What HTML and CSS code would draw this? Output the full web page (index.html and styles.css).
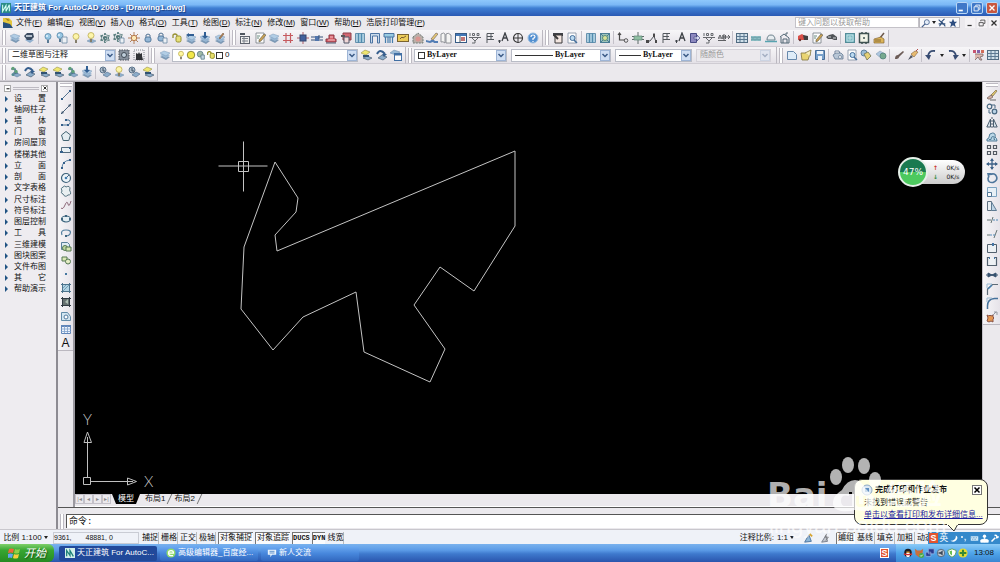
FILE: index.html
```html
<!DOCTYPE html>
<html lang="zh-CN">
<head>
<meta charset="utf-8">
<title>天正建筑 For AutoCAD 2008</title>
<link rel="stylesheet" href="styles.css">
</head>
<body>
<svg class="defs" aria-hidden="true">
<defs>
<symbol id="layers" viewBox="0 0 12 12"><path d="M1 8l4-2 6 2-4 3z" fill="#6f8fae"/><path d="M1 6l4-2 6 2-4 3z" fill="#8fb3d3"/><path d="M1 4l4-2 6 2-4 3z" fill="#a9c9e4" stroke="#6d8fb0" stroke-width=".5"/></symbol>
<symbol id="layerprint" viewBox="0 0 12 12"><path d="M2 8l3-2 6 2-4 3z" fill="#86a9cb"/><path d="M1 4l3-3h6l1 4-3 3H4z" fill="#24364d"/><path d="M3 4h6" stroke="#dde7f0" stroke-width="1.5"/></symbol>
<symbol id="bulb-b" viewBox="0 0 12 12"><circle cx="6" cy="4.5" r="3" fill="#8cc2e2" stroke="#41789e" stroke-width=".8"/><path d="M5 8h2v3H5z" fill="#466a88"/><circle cx="5" cy="4" r="1" fill="#e5f5ff"/></symbol>
<symbol id="bulb-y" viewBox="0 0 12 12"><circle cx="6" cy="4.5" r="3" fill="#fff7a0" stroke="#b5a33c" stroke-width=".8"/><path d="M5 8h2v3H5z" fill="#77705a"/></symbol>
<symbol id="bulb-bs" viewBox="0 0 12 12"><use href="#bulb-b" x="-2" y="-1" width="12" height="12"/><path d="M6 5h5v6H6z" fill="#eef3f7" stroke="#5b7c9a" stroke-width=".8"/></symbol>
<symbol id="bulb-yl" viewBox="0 0 12 12"><path d="M2 9l4-2 5 2-4 2z" fill="#86a9cb" stroke="#5d7f9f" stroke-width=".5"/><use href="#bulb-y" y="-1" width="12" height="12"/></symbol>
<symbol id="snow" viewBox="0 0 12 12"><path d="M6 1v10M1.500 3.500l9 5M1.500 8.500l9-5" stroke="#3c6767" stroke-width="1.6" stroke-dasharray="2 1"/><circle cx="6" cy="6" r="3.500" fill="none" stroke="#4a7474" stroke-width="1.200" stroke-dasharray="1.500 1"/></symbol>
<symbol id="snow-s" viewBox="0 0 12 12"><use href="#snow" x="-1" y="-1" width="12" height="12"/><path d="M7 6h4v5H7z" fill="#eef3f7" stroke="#5b7c9a" stroke-width=".8"/></symbol>
<symbol id="sun" viewBox="0 0 12 12"><path d="M6 0v12M0 6h12M2 2l8 8M10 2l-8 8" stroke="#a4663a" stroke-width=".9"/><circle cx="6" cy="6" r="2.700" fill="#ffe9b0" stroke="#b06a35"/></symbol>
<symbol id="lock-b" viewBox="0 0 12 12"><path d="M4 6V3q2-2 4 0v3" fill="none" stroke="#3d6387"/><rect x="3" y="5" width="6" height="5" rx="2" fill="#8ab1d3" stroke="#416c94"/></symbol>
<symbol id="lock-s" viewBox="0 0 12 12"><use href="#lock-b" x="-1" y="-1" width="12" height="12"/><path d="M7 6h4v5H7z" fill="#eef3f7" stroke="#5b7c9a" stroke-width=".8"/></symbol>
<symbol id="lock-y" viewBox="0 0 12 12"><path d="M2 6V3q2-2 4 0v2" fill="none" stroke="#8b8418" stroke-width="1.300"/><rect x="5" y="4" width="5" height="6" rx="1.500" fill="#e6df6a" stroke="#8b8418"/></symbol>
<symbol id="lay-l" viewBox="0 0 12 12"><use href="#layers" y="1" width="12" height="12"/><path d="M1 3l3-2v1h5v2H4v1z" fill="#174b86"/></symbol>
<symbol id="lay-d" viewBox="0 0 12 12"><use href="#layers" y="1" width="12" height="12"/><path d="M6 7L3 4h2V0h2v4h2z" fill="#174b86"/></symbol>
<symbol id="lay-p" viewBox="0 0 12 12"><use href="#layers" y="1" width="12" height="12"/><path d="M5 6l4-5 1 1-4 5z" fill="#b4773d" stroke="#523a25" stroke-width=".5"/></symbol>
<symbol id="lay-g" viewBox="0 0 12 12"><path d="M4 9l4-2 4 2-4 2z" fill="#7fa4c6" stroke="#426587" stroke-width=".5"/><path d="M2 3h5M4 7h5M6 3v5" stroke="#245579" stroke-width="1.200"/><circle cx="4" cy="2.500" r="1.700" fill="#4c9569"/><circle cx="7" cy="5.500" r="1.700" fill="#4c9569"/><circle cx="4" cy="8.500" r="1.500" fill="#3f7f86"/></symbol>
<symbol id="lay-y" viewBox="0 0 12 12"><path d="M3 9l4-2 5 2-4 2z" fill="#7fa4c6" stroke="#223a50" stroke-width=".6"/><path d="M1 4l4-3 5 2-4 3z" fill="#eee55e" stroke="#8c8530" stroke-width=".6"/><path d="M3 7h6" stroke="#173e64" stroke-width="2"/></symbol>
<symbol id="lay-c" viewBox="0 0 12 12"><path d="M3 9l4-3 5 2-4 3z" fill="#7fa4c6" stroke="#223a50" stroke-width=".6"/><path d="M2 5q3-6 8 0" fill="none" stroke="#1d4b80" stroke-width="2"/><path d="M7 5h5l-3 3z" fill="#1d4b80"/></symbol>
<symbol id="lay-k" viewBox="0 0 12 12"><path d="M4 9l4-3 4 2-4 3z" fill="#7fa4c6" stroke="#36587a" stroke-width=".6"/><circle cx="4" cy="4" r="3" fill="#a6b7c8" stroke="#48637e"/><path d="M4 2v3h2" stroke="#223a50" fill="none"/></symbol>
<symbol id="list" viewBox="0 0 12 12"><path d="M1 1h5v2H1z" fill="#3a424c"/><rect x="1.500" y="4.500" width="9" height="7" fill="#eee" stroke="#4a515c"/><path d="M3 6.500h6M3 9h6M5 5v6" stroke="#6b727c"/></symbol>
<symbol id="edit" viewBox="0 0 12 12"><path d="M2 1h8v10H2z" fill="#fff" stroke="#667076" stroke-width=".8"/><path d="M5 8l5-6 2 1-5 6-2 1z" fill="#c99a3d" stroke="#4c4634" stroke-width=".6"/><path d="M3 4h3M3 6h2" stroke="#568070"/></symbol>
<symbol id="hash" viewBox="0 0 12 12"><path d="M4 1v10M8.500 1v10M1 3.500h10M1 8.500h10" stroke="#c1464b" stroke-width="1.200"/></symbol>
<symbol id="column" viewBox="0 0 12 12"><path d="M6 0v12M0 6h12" stroke="#a34b57"/><rect x="3" y="3" width="6" height="6" fill="#2c4f91" stroke="#1b315f"/></symbol>
<symbol id="wall" viewBox="0 0 12 12"><path d="M0 5h4M0 8h4M8 5h4M8 8h4" stroke="#1f3f6a" stroke-width="1.200"/><path d="M4 4h4v5H4z" fill="#3d66a4"/><path d="M8 3v4" stroke="#1f3f6a"/></symbol>
<symbol id="redstair" viewBox="0 0 12 12"><path d="M1 10h10V7H9V3H4v4H1z" fill="#d8515b" stroke="#7f1f2d"/><path d="M3 8h7M5 5h3" stroke="#f2b8bc"/><path d="M1 11h10" stroke="#3c4a66"/></symbol>
<symbol id="redwin" viewBox="0 0 12 12"><path d="M3 1h8v7H3z" fill="#cf5661" stroke="#812732"/><path d="M1 3h4v2H1z" fill="#444"/><path d="M4 5h5v6H4z" fill="#f2d5d5" stroke="#3d4556"/></symbol>
<symbol id="door" viewBox="0 0 12 12"><path d="M1.500 1.500h9v9h-9z" fill="#a3cce0" stroke="#5686a5"/><path d="M4.500 1v10M7.500 1v10" stroke="#3d7fa5" stroke-width="1.300"/></symbol>
<symbol id="pi" viewBox="0 0 12 12"><path d="M1.500 11V1.500h9V11h-2V4h-5v7z" fill="#c5d9ec" stroke="#376498"/></symbol>
<symbol id="pi2" viewBox="0 0 12 12"><path d="M1 1.500h10V5H1z" fill="#8cc7e0" stroke="#376498"/><path d="M2.500 5v6M9.500 5v6M5 5v6M7 5v6" stroke="#2e6fa4" stroke-width="1.200"/></symbol>
<symbol id="sign" viewBox="0 0 12 12"><rect x=".5" y="2.500" width="11" height="7" fill="#ecc846" stroke="#6b5117"/><path d="M3 7l2-2 1 1 3-2" stroke="#6b4a17" fill="none"/></symbol>
<symbol id="roof" viewBox="0 0 12 12"><path d="M1 5l5-4 5 4v6H1z" fill="#b3a79f" stroke="#5f6c66" stroke-dasharray="2 1"/><circle cx="6" cy="7" r="2.500" fill="#d88a84"/></symbol>
<symbol id="pencil" viewBox="0 0 12 12"><path d="M5 7l5-6 2 1-5 6z" fill="#e5c463" stroke="#544" stroke-width=".6"/><path d="M0 8l4 1 1-1h3l1 1h3v2H8l-1-1-3 1-4-1z" fill="#3f6fae"/></symbol>
<symbol id="pages" viewBox="0 0 12 12"><path d="M1 2q3-2 4 0v9Q3 9 1 10zM6 2q2-2 5 1v8H6z" fill="#f6f6f4" stroke="#6b6f76" stroke-width=".8"/></symbol>
<symbol id="win" viewBox="0 0 12 12"><rect x=".5" y="1.500" width="11" height="9" fill="#fff" stroke="#1e4878"/><path d="M1 3h10" stroke="#2a67b0" stroke-width="2"/><path d="M5 4v7" stroke="#345"/><path d="M6 5h4v4H6z" fill="#b66"/></symbol>
<symbol id="coord" viewBox="0 0 12 12"><path d="M1 1v3M3.500 1.500h2v2h-2zM8 1.500h2v2H8zM0 5.500h12M3 6l3 3 3-3M6 8v3M3 11h3" fill="none" stroke="#55585c"/></symbol>
<symbol id="flag" viewBox="0 0 12 12"><path d="M3 11V1.500h7M3 4.500h6M3 7.500h7M7 1v7" stroke="#3f454a" fill="none"/></symbol>
<symbol id="dota" viewBox="0 0 12 12"><path d="M4 9l3-8 3 8M5 6h4" stroke="#262b30" stroke-width="1.300" fill="none"/><path d="M0 9h3M1.500 8v3" stroke="#262b30"/></symbol>
<symbol id="compass" viewBox="0 0 12 12"><circle cx="6" cy="6" r="4.500" fill="none" stroke="#222" stroke-width="1.200"/><path d="M6 1v10M1 6h10" stroke="#222"/></symbol>
<symbol id="help" viewBox="0 0 12 12"><circle cx="6" cy="6" r="5" fill="#3d83cd" stroke="#90b8dd"/><path d="M4 5q0-2 2-2t2 1.500Q8 6 6 6.500V8M6 9v1" fill="none" stroke="#fff" stroke-width="1.200"/></symbol>
<symbol id="plot" viewBox="0 0 12 12"><path d="M1 1h10v3H1z" fill="#282b30"/><path d="M3 3h7v8H3z" fill="#f5e6df" stroke="#222"/><path d="M2 3l4 4" stroke="#222" stroke-width="2"/></symbol>
<symbol id="preview" viewBox="0 0 12 12"><path d="M2 1h8v10H2z" fill="#fff" stroke="#718096" stroke-width=".8"/><circle cx="6.500" cy="6" r="2.500" fill="#b6d8f0" stroke="#2f5f91"/><path d="M8 8l3 3" stroke="#2f5f91" stroke-width="1.500"/></symbol>
<symbol id="ggrid" viewBox="0 0 12 12"><path d="M1.500 1.500h9v9h-9z" fill="#93bfb4" stroke="#356f88"/><circle cx="6" cy="6" r="2.500" fill="#d7e08d" stroke="#43806b"/><path d="M1 1l3 3M11 1L8 4M1 11l3-3M11 11L8 8" stroke="#356f88"/></symbol>
<symbol id="axis" viewBox="0 0 12 12"><path d="M2.500 1v7H8M1 3l1.500-2L4 3" stroke="#333" fill="none" stroke-width="1.200"/><circle cx="9" cy="8.500" r="1.800" fill="none" stroke="#444"/></symbol>
<symbol id="gcross" viewBox="0 0 12 12"><path d="M6 0v12M0 4.500h3M9 4.500h3M0 7.500h3M9 7.500h3" stroke="#4b5a56"/><path d="M2 4h8v4H2z" fill="#84b998" stroke="#477765" stroke-width=".7"/></symbol>
<symbol id="nline" viewBox="0 0 12 12"><path d="M1 9h3l4-5 2 6M8 4V1" stroke="#3c4146" fill="none"/><path d="M0 8h3v3H0zM9 8h2v3H9zM7 2h2v3H7z" fill="#333"/></symbol>
<symbol id="exit" viewBox="0 0 12 12"><path d="M1.500 1.500h6v9h-6z" fill="#807bb8" stroke="#333777"/><path d="M5 5h3V3l3 3-3 3V7H5z" fill="#d8ddf2" stroke="#333777" stroke-width=".7"/></symbol>
<symbol id="ab" viewBox="0 0 12 12"><path d="M0 7l2-4 2 4M1 6h2M5 3h2l1 1-1 1H5zM5 5h2l1 1-1 1H5zM5 3v4M0 8.500h8M8 5h4M10 3l2 2-2 2" fill="none" stroke="#4b4d50"/></symbol>
<symbol id="table" viewBox="0 0 12 12"><rect x=".5" y="1.500" width="11" height="9" fill="#cddfe9" stroke="#3d5b73"/><path d="M4 2v8M8 2v8M1 4.500h10M1 7.500h10" stroke="#496a86"/></symbol>
<symbol id="water" viewBox="0 0 12 12"><path d="M1 4h10v5H1z" fill="#7fb8be"/><path d="M1 5l2 1 2-1 2 1 2-1 2 1M1 8l2-1 2 1 2-1 2 1 2-1" stroke="#4a8794" stroke-width=".7" fill="none"/></symbol>
<symbol id="dome" viewBox="0 0 12 12"><path d="M2 8q0-5 4-5t4 5z" fill="#e6edf0" stroke="#5c7480"/><path d="M0 9.500h12" stroke="#459aa8" stroke-width="1.500"/></symbol>
<symbol id="house" viewBox="0 0 12 12"><path d="M1 5l4-3 5 4M2 5v6h8V6M4 11V7h4v4M7 4V1h2" fill="none" stroke="#3e5665"/></symbol>
<symbol id="car" viewBox="0 0 12 12"><path d="M1 4l4-2 3 2-1 4H1z" fill="#d73b32"/><path d="M6 3l5 1v4H7z" fill="#292929"/><circle cx="3" cy="8" r="1.200" fill="#522"/></symbol>
<symbol id="eye" viewBox="0 0 12 12"><path d="M0 5l3-2 4-1 4 3v3H8L6 7H2z" fill="#3b3f42"/><path d="M2 5h3M7 6h3" stroke="#cfd3d5"/></symbol>
<symbol id="hatch" viewBox="0 0 12 12"><rect x="1.500" y="1.500" width="9" height="9" fill="#6eb4be" stroke="#40808d"/><path d="M3 3h6v6H3zM5 5h2v2H5z" fill="none" stroke="#c5e6ea" stroke-width=".8"/></symbol>
<symbol id="frame" viewBox="0 0 12 12"><rect x="1.500" y="1.500" width="9" height="9" fill="#f3f6e8" stroke="#283e3d" stroke-width="1.500"/><path d="M4 0v2M8 0v2M4 10v2M8 10v2M5 6h2" stroke="#283e3d" stroke-width="1.500"/></symbol>
<symbol id="broom" viewBox="0 0 12 12"><path d="M7 6l4-5" stroke="#594333" stroke-width="1.500"/><path d="M1 7l7-2 3 2v4H1z" fill="#dbae45" stroke="#79571c" stroke-width=".7"/><path d="M3 7v3M5 7v3M7 7v3" stroke="#79571c"/></symbol>
<symbol id="gear" viewBox="0 0 12 12"><rect x="1" y="1" width="10" height="10" fill="#788390" stroke="#333b45" stroke-dasharray="1.500 1"/><circle cx="6" cy="6" r="2.500" fill="#b9cbd9" stroke="#28343f"/></symbol>
<symbol id="gear-k" viewBox="0 0 12 12"><path d="M1 1h10v10H1z" fill="none" stroke="#737780" stroke-dasharray="1 1"/><path d="M3 4l2 1 1-2 1 2 2-1v3l1 4H3z" fill="#17191c"/></symbol>
<symbol id="laywin" viewBox="0 0 12 12"><path d="M0 4l4-3 6 2-4 3z" fill="#8fb3d3" stroke="#587a9c" stroke-width=".5"/><rect x="4.500" y="4.500" width="7" height="7" fill="#fff" stroke="#2b5f9a"/><path d="M4.500 5.500h7" stroke="#2b5f9a" stroke-width="2"/></symbol>
<symbol id="new" viewBox="0 0 12 12"><path d="M1.500 2.500h6l3 3v5h-9z" fill="#dcecfa" stroke="#547ba3"/></symbol>
<symbol id="open" viewBox="0 0 12 12"><path d="M1 4h5l1 1h3l-2 6H2z" fill="#e9d262" stroke="#746524" stroke-width=".8"/><path d="M5 4l6-3-1 6" fill="#f9efb1" stroke="#746524" stroke-width=".8"/></symbol>
<symbol id="save" viewBox="0 0 12 12"><path d="M1.500 1.500h9v9h-9z" fill="#6997c7" stroke="#315d8d"/><path d="M3 2h6v3H3zM4 7h4v4H4z" fill="#eef5fb"/></symbol>
<symbol id="print" viewBox="0 0 12 12"><path d="M3 5V2h4l1 3" fill="#fff" stroke="#627791"/><path d="M1 6l3-2h5l2 2v4H3z" fill="#b1c2d3" stroke="#526b87" stroke-width=".8"/><circle cx="8" cy="8" r="1.500" fill="#fff" stroke="#526b87" stroke-width=".7"/></symbol>
<symbol id="publish" viewBox="0 0 12 12"><circle cx="4" cy="4" r="3" fill="#8eb4d2" stroke="#4c7494"/><path d="M4 5l4-2 3 4-4 4z" fill="#e5cd65" stroke="#5e6340" stroke-width=".8"/></symbol>
<symbol id="globe" viewBox="0 0 12 12"><path d="M1 5l4-3 5 3-3 5z" fill="#a6c2dd" stroke="#7794b0" stroke-width=".6"/><circle cx="8" cy="7" r="3" fill="#67a182" stroke="#40756d" stroke-width=".8"/></symbol>
<symbol id="brush" viewBox="0 0 12 12"><path d="M2 10q0-4 3-4l5-4 1 1-5 5q0 2-4 2z" fill="#5b4943"/></symbol>
<symbol id="match" viewBox="0 0 12 12"><path d="M1 11l3-5 2 2z" fill="#3a4250"/><path d="M4 5l3 3 4-5-3-1z" fill="#e7b45f" stroke="#876334" stroke-width=".7"/><path d="M9 2l2-2" stroke="#a33"/></symbol>
<symbol id="undo" viewBox="0 0 12 12"><path d="M10 2Q4 1 3 7" fill="none" stroke="#1f3661" stroke-width="1.800"/><path d="M0 6h6l-2 5z" fill="#1f3661"/></symbol>
<symbol id="redo" viewBox="0 0 12 12"><path d="M2 2q6-1 7 5" fill="none" stroke="#1f3661" stroke-width="1.800"/><path d="M6 6h6l-4 5z" fill="#1f3661"/></symbol>
<symbol id="props" viewBox="0 0 12 12"><path d="M0 1h3v3H0z" fill="#c33f5d"/><path d="M4 1h3v3H4z" fill="#734fa1"/><path d="M8 1h3v3H8z" fill="#ce5b44"/><path d="M2 5h8v2l-3 1 2 3H7L5 8l-3 3" fill="#dcb0a6" stroke="#695353" stroke-width=".8"/></symbol>
<symbol id="line" viewBox="0 0 12 12"><path d="M2 10l8-8" stroke="#426585"/><path d="M1 9h2v2H1zM9 1h2v2H9z" fill="#1b4c7d"/></symbol>
<symbol id="xline" viewBox="0 0 12 12"><path d="M1 11L11 1" stroke="#344e67"/><path d="M1 11l1-3 2 2zM11 1L8 2l2 2z" fill="#233f5c"/></symbol>
<symbol id="pline" viewBox="0 0 12 12"><path d="M1 9h7q4-2 1-5H6" fill="none" stroke="#2c5f86"/><path d="M1 8h2v2H1zM7 8h2v2H7zM5 3h2v2H5z" fill="#1b4c7d"/></symbol>
<symbol id="poly" viewBox="0 0 12 12"><path d="M6 1.500l4.500 3.500-1.700 5.500H3.200L1.500 5z" fill="#e3edf1" stroke="#2c5262"/></symbol>
<symbol id="rect" viewBox="0 0 12 12"><path d="M1.500 3.500h9v5h-9z" fill="#e7eff4" stroke="#3d5a70"/><path d="M0 7h3v2H0zM9 3h2v2H9z" fill="#1b4c7d"/></symbol>
<symbol id="arc" viewBox="0 0 12 12"><path d="M2 10q0-7 8-8" stroke="#47769c" fill="none"/><path d="M1 9h2v2H1zM3 4h2v2H3zM9 1h2v2H9z" fill="#1b4c7d"/></symbol>
<symbol id="circle" viewBox="0 0 12 12"><circle cx="6" cy="6" r="4.500" fill="#edf5fa" stroke="#254e69" stroke-width="1.200"/><path d="M6 6l3-3" stroke="#357"/><circle cx="6" cy="6" r="1.300" fill="#2b6da6"/></symbol>
<symbol id="cloud" viewBox="0 0 12 12"><path d="M3 2q2-2 3 0 4-2 4 2-1 1 0 2 2 4-2 4-3 3-5-1-3-1-1-3-2-3 1-4z" fill="#e9f0f2" stroke="#3e6271"/></symbol>
<symbol id="spline" viewBox="0 0 12 12"><path d="M1 9q2 2 4-3t3-1 3-3" stroke="#835a6c" fill="none"/></symbol>
<symbol id="ell" viewBox="0 0 12 12"><ellipse cx="6" cy="6" rx="4.500" ry="3" fill="#e2eef3" stroke="#23516e" stroke-width="1.200"/><path d="M1 5h2v2H1zM9 5h2v2H9zM5 2h2v2H5z" fill="#23516e"/></symbol>
<symbol id="ellarc" viewBox="0 0 12 12"><path d="M2 8Q0 3 6 3t4 4q-1 2-4 2" fill="none" stroke="#3d6f93" stroke-width="1.200"/><path d="M5 8h2v2H5z" fill="#23516e"/></symbol>
<symbol id="insblock" viewBox="0 0 12 12"><path d="M1.500 1.500h6l2 2v5h-8z" fill="#dcebf3" stroke="#45728f"/><circle cx="5" cy="7" r="2.500" fill="#b7d497" stroke="#40693c"/><path d="M6 6h5v4H6z" fill="#d5e7a9" stroke="#40693c"/></symbol>
<symbol id="mkblock" viewBox="0 0 12 12"><path d="M2 3h5v4H2z" fill="#d9e8ad" stroke="#40693c"/><circle cx="8" cy="7.500" r="2.500" fill="#e5eec0" stroke="#40693c"/></symbol>
<symbol id="point" viewBox="0 0 12 12"><path d="M5 5h2v2H5z" fill="#2d6996"/></symbol>
<symbol id="hat" viewBox="0 0 12 12"><path d="M2 2h8v8H2z" fill="#a9cfe2"/><path d="M1 2.500h10M1 9.500h10M2.500 1v10M9.500 1v10" stroke="#37637f"/><path d="M3 6l3-3M3 9l6-6" stroke="#6395ae"/></symbol>
<symbol id="grad" viewBox="0 0 12 12"><path d="M2 2h8v8H2z" fill="#53605f"/><path d="M1 2.500h10M1 9.500h10M2.500 1v10M9.500 1v10" stroke="#17232b"/><path d="M5 6l3-3v5z" fill="#a6b8ad"/></symbol>
<symbol id="region" viewBox="0 0 12 12"><path d="M1.500 2.500h6l3 4v4h-9z" fill="#cfe5f1" stroke="#4e7e9f"/><circle cx="6" cy="7" r="2" fill="#fff" stroke="#3d6c94"/></symbol>
<symbol id="tbl" viewBox="0 0 12 12"><path d="M1.500 2.500h9v8h-9z" fill="#eff5fd" stroke="#4e78b1"/><path d="M1 3h10" stroke="#4e78b1" stroke-width="2"/><path d="M4.500 3v7M7.500 3v7M1 6h10M1 8.500h10" stroke="#7097c6" stroke-width=".8"/></symbol>
<symbol id="erase" viewBox="0 0 12 12"><path d="M5 6l5-5 1 1-4 5z" fill="#dfc35d" stroke="#6e5b30" stroke-width=".7"/><path d="M1 9l4-3 2 2-3 2H2z" fill="#c9a593" stroke="#5e4c48" stroke-width=".7"/><path d="M4 11h6" stroke="#555"/></symbol>
<symbol id="copy" viewBox="0 0 12 12"><circle cx="3.500" cy="3.500" r="2.300" fill="none" stroke="#315572" stroke-width="1.200"/><circle cx="8.500" cy="8.500" r="2.300" fill="#b5d1e6" stroke="#315572" stroke-width="1.200"/><path d="M6 2h3v3M3 7v3h2" fill="none" stroke="#315572"/></symbol>
<symbol id="mirror" viewBox="0 0 12 12"><path d="M4.500 2v8H.8zM7.500 2v8h3.700z" fill="#d4e0e9" stroke="#344b5e"/><path d="M6 0v12" stroke="#344b5e" stroke-dasharray="2 1"/></symbol>
<symbol id="offset" viewBox="0 0 12 12"><path d="M1 10V8q2 0 2-2 0-4 3.500-4T9 6q2 1 2 4z" fill="#b4d5e7" stroke="#3c6d8c"/><path d="M3 8.500h2q0-3 2-3t1 3h1" fill="none" stroke="#3c6d8c"/></symbol>
<symbol id="array" viewBox="0 0 12 12"><path d="M1.500 1.500h3v3h-3zM7.500 1.500h3v3h-3zM1.500 7.500h3v3h-3zM7.500 7.500h3v3h-3z" fill="#f5f5f5" stroke="#3f4650" stroke-width="1.200"/></symbol>
<symbol id="move" viewBox="0 0 12 12"><path d="M6 1v10M1 6h10" stroke="#244e79" stroke-width="1.300"/><path d="M6 0l2 3H4zM6 12l2-3H4zM0 6l3-2v4zM12 6L9 4v4z" fill="#244e79"/></symbol>
<symbol id="rotate" viewBox="0 0 12 12"><path d="M4 2.500q5-2 6.500 2T7 10.500Q2 11 2 6.500L3 4" fill="none" stroke="#3a6791" stroke-width="1.600"/><path d="M1 1h5L2 5z" fill="#3a6791"/></symbol>
<symbol id="scale" viewBox="0 0 12 12"><path d="M1.500 1.500h9v9h-9z" fill="#e7f1f8" stroke="#6d9abb"/><path d="M1.500 6.500h4v4h-4z" fill="#fff" stroke="#3f688b"/></symbol>
<symbol id="stretch" viewBox="0 0 12 12"><path d="M1.500 1.500h4v9h-4z" fill="#e9eff4" stroke="#4c5f71"/><path d="M5.500 2l5 8.500h-5z" fill="#bad3e5" stroke="#4c6c87"/></symbol>
<symbol id="trim" viewBox="0 0 12 12"><path d="M1 6h4M5 9l2-6" stroke="#566"/><path d="M7 6h5" stroke="#3f7fb1" stroke-dasharray="2 1"/></symbol>
<symbol id="extend" viewBox="0 0 12 12"><path d="M1 7h3M8 10l3-8" stroke="#566"/><path d="M4 7h5" stroke="#3f7fb1" stroke-dasharray="2 1"/></symbol>
<symbol id="brk1" viewBox="0 0 12 12"><path d="M1.500 2.500h9v8h-9z" fill="#eef2f5" stroke="#3e4e5d"/><path d="M6 1h2v3H6z" fill="#2f669c"/></symbol>
<symbol id="brk2" viewBox="0 0 12 12"><path d="M4 2.500H1.500v8h9v-8H8" fill="#eef2f5" stroke="#3e4e5d" stroke-width="1.200"/><path d="M3 2h1v2H3zM8 2h1v2H8z" fill="#2f669c"/></symbol>
<symbol id="join" viewBox="0 0 12 12"><path d="M0 6h12" stroke="#1f3e5e"/><path d="M2 4l4 2-4 2zM10 4L6 6l4 2z" fill="#1f3e5e" stroke="#1f3e5e"/></symbol>
<symbol id="chamfer" viewBox="0 0 12 12"><path d="M1.500 12V6l5-4.500H12" fill="none" stroke="#4b5b68" stroke-width="1.200"/><path d="M1 5V1h5" fill="none" stroke="#8fb4ce"/><path d="M2 6l4-4" stroke="#2b6da6" stroke-width="1.300"/></symbol>
<symbol id="fillet" viewBox="0 0 12 12"><path d="M1.500 12V9q0-7 7-7.500H12" fill="none" stroke="#2f6291" stroke-width="1.500"/><path d="M1 5V1h5" fill="none" stroke="#8fb4ce"/></symbol>
<symbol id="explode" viewBox="0 0 12 12"><path d="M1 4l2 1 1-1 1 1 2-1v2l1 1-1 1v3l-2-1-2 1-2-1 1-3z" fill="#e48b3c" stroke="#7a3f31"/><path d="M7 4l3-3M8 1h3v3" fill="none" stroke="#8a8f98"/></symbol>
<symbol id="chev" viewBox="0 0 8 8"><path d="M1.500 3L4 5.500 6.500 3" fill="none" stroke="#3b5a86" stroke-width="1.500"/></symbol>
</defs>
</svg>

<div class="app">
<header class="title">
  <svg class="logo" viewBox="0 0 12 12"><path d="M0 0h12v12H0z" fill="#2a8c86"/><path d="M2 2v8l4-7v7l4-8v8" fill="none" stroke="#d8fff6" stroke-width="1.300"/></svg>
  <h1>天正建筑 For AutoCAD 2008 - [Drawing1.dwg]</h1>
  <button class="wb" aria-label="最小化"><svg viewBox="0 0 12 12"><path d="M2 9h5" stroke="#fff" stroke-width="2"/></svg></button>
  <button class="wb" aria-label="还原"><svg viewBox="0 0 12 12"><path d="M4.500 4V2.500h5v5H8M2.500 4.500h5v5h-5z" fill="none" stroke="#fff"/></svg></button>
  <button class="wb close" aria-label="关闭"><svg viewBox="0 0 12 12"><path d="M3 3l6 6M9 3L3 9" stroke="#fff" stroke-width="1.600"/></svg></button>
</header>

<nav class="menu">
  <svg class="doc" viewBox="0 0 12 12"><path d="M1 1h6l3 3v7H1z" fill="#e4c53e"/><path d="M1 5l7 2 3 4H1z" fill="#264f7e"/><path d="M3 1l3 3 2-1z" fill="#9a7d24"/></svg>
  <button>文件(<u>F</u>)</button><button>编辑(<u>E</u>)</button><button>视图(<u>V</u>)</button><button>插入(<u>I</u>)</button><button>格式(<u>O</u>)</button><button>工具(<u>T</u>)</button><button>绘图(<u>D</u>)</button><button>标注(<u>N</u>)</button><button>修改(<u>M</u>)</button><button>窗口(<u>W</u>)</button><button>帮助(<u>H</u>)</button><button>浩辰打印管理(<u>P</u>)</button>
  <input class="ask" type="text" aria-label="帮助" placeholder="键入问题以获取帮助">
  <span class="asktools">
    <button aria-label="搜索"><svg viewBox="0 0 12 12"><circle cx="7" cy="5" r="3" fill="#e4edf8" stroke="#46608c"/><path d="M5 7l-4 4" stroke="#46608c" stroke-width="1.500"/></svg></button>
    <i class="dd"></i>
    <button aria-label="通讯中心"><svg viewBox="0 0 12 12"><path d="M2 2l3 3 4-4M3 10l3-5 4 5M2 7h8" fill="none" stroke="#31517d" stroke-width="1.300"/></svg></button>
    <button aria-label="收藏夹"><svg viewBox="0 0 12 12"><path d="M6 1l1.500 3.500H11L8.300 7l1 4L6 8.800 2.700 11l1-4L1 4.500h3.500z" fill="#2e4e80"/></svg></button>
  </span>
  <button class="mdi" aria-label="最小化文档"><svg viewBox="0 0 12 12"><path d="M3 9h5" stroke="#333" stroke-width="1.500"/></svg></button>
  <button class="mdi" aria-label="还原文档"><svg viewBox="0 0 12 12"><path d="M4.500 4V2.500h5v4H8M2.500 5.500h5v4h-5z" fill="none" stroke="#444"/></svg></button>
  <button class="mdi" aria-label="关闭文档"><svg viewBox="0 0 12 12"><path d="M3 3l6 6M9 3L3 9" stroke="#333" stroke-width="1.500"/></svg></button>
</nav>

<div class="row first">
  <div class="bar bar-a"><i class="grip"></i>
    <button aria-label="图层"><svg><use href="#layers"/></svg></button><button aria-label="图层打印"><svg><use href="#layerprint"/></svg></button><i class="sep"></i>
    <button aria-label="关闭图层"><svg><use href="#bulb-b"/></svg></button><button aria-label="关闭其他层"><svg><use href="#bulb-bs"/></svg></button><button aria-label="打开图层"><svg><use href="#bulb-y"/></svg></button><button aria-label="图层全开"><svg><use href="#bulb-yl"/></svg></button><button aria-label="冻结图层"><svg><use href="#snow"/></svg></button><button aria-label="冻结其他"><svg><use href="#snow-s"/></svg></button><button aria-label="解冻图层"><svg><use href="#sun"/></svg></button><button aria-label="锁定图层"><svg><use href="#lock-b"/></svg></button><button aria-label="锁定其他"><svg><use href="#lock-s"/></svg></button><button aria-label="解锁图层"><svg><use href="#lock-y"/></svg></button><button aria-label="图层恢复"><svg><use href="#lay-l"/></svg></button><button aria-label="合并图层"><svg><use href="#lay-d"/></svg></button><button aria-label="图元改层"><svg><use href="#lay-p"/></svg></button>
  </div>
  <div class="bar bar-b"><i class="grip"></i>
    <button aria-label="选项"><svg><use href="#list"/></svg></button><button aria-label="编辑"><svg><use href="#edit"/></svg></button><button aria-label="图层"><svg><use href="#layers"/></svg></button><button aria-label="轴网"><svg><use href="#hash"/></svg></button><button aria-label="柱子"><svg><use href="#column"/></svg></button><button aria-label="墙体"><svg><use href="#wall"/></svg></button><button aria-label="楼梯"><svg><use href="#redstair"/></svg></button><button aria-label="窗"><svg><use href="#redwin"/></svg></button><button aria-label="门"><svg><use href="#door"/></svg></button><button aria-label="门套"><svg><use href="#pi"/></svg></button><button aria-label="台阶"><svg><use href="#pi2"/></svg></button><button aria-label="标牌"><svg><use href="#sign"/></svg></button><button aria-label="屋顶"><svg><use href="#roof"/></svg></button><button aria-label="绘制"><svg><use href="#pencil"/></svg></button><button aria-label="图库"><svg><use href="#pages"/></svg></button><button aria-label="表格"><svg><use href="#win"/></svg></button><button aria-label="坐标"><svg><use href="#coord"/></svg></button><button aria-label="标高"><svg><use href="#flag"/></svg></button><button aria-label="文字"><svg><use href="#dota"/></svg></button><button aria-label="指北针"><svg><use href="#compass"/></svg></button><button aria-label="帮助"><svg><use href="#help"/></svg></button>
  </div>
  <div class="bar bar-c"><i class="grip"></i>
    <button aria-label="出图"><svg><use href="#plot"/></svg></button><button aria-label="预览"><svg><use href="#preview"/></svg></button><i class="sep"></i>
    <button aria-label="门"><svg><use href="#door"/></svg></button><button aria-label="网格"><svg><use href="#ggrid"/></svg></button><i class="sep"></i>
    <button aria-label="坐标轴"><svg><use href="#axis"/></svg></button><button aria-label="对齐"><svg><use href="#gcross"/></svg></button><button aria-label="折线"><svg><use href="#nline"/></svg></button><button aria-label="标高"><svg><use href="#flag"/></svg></button><button aria-label="文字"><svg><use href="#dota"/></svg></button><button aria-label="导出"><svg><use href="#exit"/></svg></button><button aria-label="坐标"><svg><use href="#coord"/></svg></button><button aria-label="替换"><svg><use href="#ab"/></svg></button><i class="sep"></i>
    <button aria-label="表格"><svg><use href="#table"/></svg></button><button aria-label="水面"><svg><use href="#water"/></svg></button><button aria-label="穹顶"><svg><use href="#dome"/></svg></button><button aria-label="房屋"><svg><use href="#house"/></svg></button><i class="sep"></i>
    <button aria-label="车位"><svg><use href="#car"/></svg></button><button aria-label="编辑"><svg><use href="#edit"/></svg></button><button aria-label="视图"><svg><use href="#eye"/></svg></button><i class="sep"></i>
    <button aria-label="填充"><svg><use href="#hatch"/></svg></button><button aria-label="图框"><svg><use href="#frame"/></svg></button><button aria-label="清理"><svg><use href="#broom"/></svg></button>
  </div>
</div>

<div class="row">
  <div class="bar bar-d"><i class="grip"></i>
    <label class="combo grow"><select aria-label="工作空间"><option>二维草图与注释</option></select><span class="arr"><svg><use href="#chev"/></svg></span></label>
    <button aria-label="工作空间设置"><svg><use href="#gear"/></svg></button><button aria-label="我的工作空间"><svg><use href="#gear-k"/></svg></button>
  </div>
  <div class="bar bar-e"><i class="grip"></i>
    <button aria-label="图层特性"><svg><use href="#layers"/></svg></button>
    <label class="combo grow"><svg><use href="#bulb-y"/></svg><svg viewBox="0 0 12 12"><circle cx="6" cy="6" r="4.500" fill="#f2e84a" stroke="#77752b"/></svg><svg viewBox="0 0 12 12"><circle cx="5" cy="5" r="3.500" fill="#9fb9a5" stroke="#60818a"/><path d="M6 6h4v5H6z" fill="#c2d5e2" stroke="#60818a"/></svg><svg><use href="#lock-y"/></svg><i class="sw"></i><select aria-label="图层"><option>0</option></select><span class="arr"><svg><use href="#chev"/></svg></span></label>
    <button aria-label="置为当前"><svg><use href="#lay-y"/></svg></button><button aria-label="上一个图层"><svg><use href="#lay-c"/></svg></button><button aria-label="图层状态"><svg><use href="#laywin"/></svg></button>
  </div>
  <div class="bar bar-f"><i class="grip"></i>
    <label class="combo c1 by"><i class="sw"></i><select aria-label="颜色"><option>ByLayer</option></select><span class="arr"><svg><use href="#chev"/></svg></span></label>
    <label class="combo c2 by"><i class="ln"></i><select aria-label="线型"><option>ByLayer</option></select><span class="arr"><svg><use href="#chev"/></svg></span></label>
    <label class="combo c3 by"><i class="ln short"></i><select aria-label="线宽"><option>ByLayer</option></select><span class="arr"><svg><use href="#chev"/></svg></span></label>
    <label class="combo c4 off"><select aria-label="打印样式" disabled><option>随颜色</option></select><span class="arr"><svg><use href="#chev"/></svg></span></label>
  </div>
  <div class="bar bar-g"><i class="grip"></i>
    <button aria-label="新建"><svg><use href="#new"/></svg></button><button aria-label="打开"><svg><use href="#open"/></svg></button><button aria-label="保存"><svg><use href="#save"/></svg></button><i class="sep"></i>
    <button aria-label="打印"><svg><use href="#print"/></svg></button><button aria-label="打印预览"><svg><use href="#preview"/></svg></button><button aria-label="发布"><svg><use href="#publish"/></svg></button><button aria-label="网络"><svg><use href="#globe"/></svg></button><i class="sep"></i>
    <button aria-label="画笔"><svg><use href="#brush"/></svg></button><button aria-label="特性匹配"><svg><use href="#match"/></svg></button><i class="sep"></i>
    <button aria-label="放弃"><svg><use href="#undo"/></svg></button><i class="dd"></i><button aria-label="重做"><svg><use href="#redo"/></svg></button><i class="dd"></i><i class="sep"></i>
    <button aria-label="特性"><svg><use href="#props"/></svg></button><button aria-label="设计中心"><svg><use href="#table"/></svg></button>
  </div>
</div>

<div class="row">
  <div class="bar bar-h"><i class="grip"></i>
    <button aria-label="图层匹配"><svg><use href="#lay-g"/></svg></button><button aria-label="更改图层"><svg><use href="#lay-c"/></svg></button><button aria-label="复制到图层"><svg><use href="#lay-y"/></svg></button><button aria-label="图层漫游"><svg><use href="#lay-y"/></svg></button><button aria-label="图层隔离"><svg><use href="#lay-g"/></svg></button><button aria-label="取消隔离"><svg><use href="#lay-d"/></svg></button><i class="sep"></i>
    <button aria-label="图层冻结"><svg><use href="#lay-k"/></svg></button><button aria-label="图层关闭"><svg><use href="#bulb-yl"/></svg></button><button aria-label="图层锁定"><svg><use href="#lay-k"/></svg></button><button aria-label="图层解锁"><svg><use href="#lay-y"/></svg></button>
  </div>
</div>

<div class="body">
  <aside class="palette">
    <div class="phead"><button aria-label="折叠"><svg viewBox="0 0 8 8"><path d="M2 5h4" stroke="#222" stroke-width="1.500"/></svg></button><i></i><button aria-label="关闭"><svg viewBox="0 0 8 8"><path d="M2 2l4 4M6 2L2 6" stroke="#222" stroke-width="1.300"/></svg></button></div>
    <ul>
      <li><button>设　　置</button></li><li><button>轴网柱子</button></li><li><button>墙　　体</button></li><li><button>门　　窗</button></li><li><button>房间屋顶</button></li><li><button>楼梯其他</button></li><li><button>立　　面</button></li><li><button>剖　　面</button></li><li><button>文字表格</button></li><li><button>尺寸标注</button></li><li><button>符号标注</button></li><li><button>图层控制</button></li><li><button>工　　具</button></li><li><button>三维建模</button></li><li><button>图块图案</button></li><li><button>文件布图</button></li><li><button>其　　它</button></li><li><button>帮助演示</button></li>
    </ul>
  </aside>

  <div class="main">
    <div class="work">
      <div class="vwrap"><div class="vbar draw"><i class="hgrip"></i>
        <button aria-label="直线"><svg><use href="#line"/></svg></button><button aria-label="构造线"><svg><use href="#xline"/></svg></button><button aria-label="多段线"><svg><use href="#pline"/></svg></button><button aria-label="正多边形"><svg><use href="#poly"/></svg></button><button aria-label="矩形"><svg><use href="#rect"/></svg></button><button aria-label="圆弧"><svg><use href="#arc"/></svg></button><button aria-label="圆"><svg><use href="#circle"/></svg></button><button aria-label="修订云线"><svg><use href="#cloud"/></svg></button><button aria-label="样条曲线"><svg><use href="#spline"/></svg></button><button aria-label="椭圆"><svg><use href="#ell"/></svg></button><button aria-label="椭圆弧"><svg><use href="#ellarc"/></svg></button><button aria-label="插入块"><svg><use href="#insblock"/></svg></button><button aria-label="创建块"><svg><use href="#mkblock"/></svg></button><button aria-label="点"><svg><use href="#point"/></svg></button><button aria-label="图案填充"><svg><use href="#hat"/></svg></button><button aria-label="渐变色"><svg><use href="#grad"/></svg></button><button aria-label="面域"><svg><use href="#region"/></svg></button><button aria-label="表格"><svg><use href="#tbl"/></svg></button><button class="mtext" aria-label="多行文字">A</button>
      </div></div>
      <div class="view">
        <div class="canvas">
          <svg class="drawing" fill="none" stroke="#c4c4c4" stroke-width="1">
            <path d="M200 80l23 36-2 14-21 23 2 16L440 69v75l-41 65-34-24-26 38 31 44-15 33-66-30-8-60-53 25-30 33-32-41 3-62z"/>
            <path d="M143.500 84h49M168.500 59.500v50M163.500 79.500h10v10h-10z"/>
          </svg>
          <svg class="ucs" viewBox="0 -6 80 86" fill="none" stroke="#c0c0c0"><path d="M8.500 63.500h7v7h-7zM12.500 63V28.500M9 28.500h7.500L12.500 18zM16 67.500h36M52.500 64v7l9-3.500zM52 67.500h6M12.500 28v-5"/><text x="8" y="11">Y</text><text x="69" y="73">X</text></svg>
          <div class="meter"><span class="ball">47%</span><span class="rates"><b class="up">↑</b><span>0K/s</span><b class="dn">↓</b><span>0K/s</span></span></div>
        </div>
        <div class="tabs">
          <span class="nav"><button aria-label="首个">|◂</button><button aria-label="上一个">◂</button><button aria-label="下一个">▸</button><button aria-label="末个">▸|</button></span>
          <button class="tab on">模型</button><button class="tab">布局1</button><button class="tab">布局2</button>
        </div>
      </div>
      <div class="vwrap right"><div class="vbar modify"><i class="hgrip"></i>
        <button aria-label="删除"><svg><use href="#erase"/></svg></button><button aria-label="复制"><svg><use href="#copy"/></svg></button><button aria-label="镜像"><svg><use href="#mirror"/></svg></button><button aria-label="偏移"><svg><use href="#offset"/></svg></button><button aria-label="阵列"><svg><use href="#array"/></svg></button><button aria-label="移动"><svg><use href="#move"/></svg></button><button aria-label="旋转"><svg><use href="#rotate"/></svg></button><button aria-label="缩放"><svg><use href="#scale"/></svg></button><button aria-label="拉伸"><svg><use href="#stretch"/></svg></button><button aria-label="修剪"><svg><use href="#trim"/></svg></button><button aria-label="延伸"><svg><use href="#extend"/></svg></button><button aria-label="打断于点"><svg><use href="#brk1"/></svg></button><button aria-label="打断"><svg><use href="#brk2"/></svg></button><button aria-label="合并"><svg><use href="#join"/></svg></button><button aria-label="倒角"><svg><use href="#chamfer"/></svg></button><button aria-label="圆角"><svg><use href="#fillet"/></svg></button><button aria-label="分解"><svg><use href="#explode"/></svg></button>
      </div></div>
    </div>
    <div class="cmd"><i class="grip"></i><label><span>命令:</span><input type="text" aria-label="命令"></label></div>
  </div>
</div>

<footer class="status">
  <button class="ratio">比例 1:100 <i class="dd"></i></button>
  <output class="coords"><span>9361,</span><span>48881, 0</span></output>
  <button>捕捉</button><button>栅格</button><button>正交</button><button>极轴</button><button class="in">对象捕捉</button><button class="in">对象追踪</button><button class="in mono">DUCS</button><button class="in mono">DYN</button><button>线宽</button>
  <span class="sright">
    <button class="anno">注释比例:</button><button class="one">1:1 <i class="dd"></i></button>
    <button class="si" aria-label="注释可见性"><svg viewBox="0 0 12 12"><path d="M2 11l5-9 3 8z" fill="#8eb7d8" stroke="#406a96"/><path d="M8 1l3 3" stroke="#d7a32b" stroke-width="2"/></svg></button><button class="si" aria-label="自动缩放"><svg viewBox="0 0 12 12"><path d="M2 11l5-8 2 7z" fill="#c4c8ce" stroke="#6c7280"/><path d="M8 1L6 5h4L7 9" fill="none" stroke="#777"/></svg></button>
    <button class="in">编组</button><button>基线</button><button>填充</button><button>加粗</button><button>动态</button>
  </span>
  <div class="ime">
    <b>S</b><span>英</span>
    <svg viewBox="0 0 12 12"><path d="M9 2q1 7-7 7 5 3 8-1t-1-6z" fill="#fff"/></svg>
    <svg viewBox="0 0 12 12"><circle cx="4" cy="4" r="1.300" fill="#fff"/><path d="M7 7h2l-1 3" stroke="#fff" fill="none"/></svg>
    <svg viewBox="0 0 12 12"><path d="M1 3h10v6H1z" fill="#cfe8f8"/><path d="M2 5h8M3 7h6" stroke="#397eb6" stroke-dasharray="1 1"/></svg>
    <svg viewBox="0 0 12 12"><circle cx="6" cy="3" r="2.200" fill="#fff"/><path d="M6 4v7M1 8q5-3 10 0v3H1z" fill="#fff" stroke="#fff"/></svg>
    <svg viewBox="0 0 12 12"><path d="M2 10l5-5M6 2q4-1 3 3 2 0 2-2" stroke="#fff" stroke-width="2" fill="none"/></svg>
  </div>
</footer>

<footer class="task">
  <button class="start"><svg viewBox="0 0 12 12"><path d="M1 2q2-1 5 0L5 6Q3 5 0 6z" fill="#f0653a"/><path d="M7 2q2 1 5 0l-1 4q-3 1-5 0z" fill="#8fd04a"/><path d="M0 7q2-1 5 0l-1 4q-2-1-4 0z" fill="#63a3f2"/><path d="M6 7q2 1 5 0l-1 4q-3 1-5 0z" fill="#f8cf3d"/></svg><em>开始</em></button>
  <button class="app-btn on"><svg viewBox="0 0 12 12"><path d="M0 0h12v12H0z" fill="#d3efe9"/><path d="M2 10V3l4 6V3l4 7" fill="none" stroke="#1b8176" stroke-width="1.500"/></svg><span>天正建筑 For AutoC...</span></button>
  <button class="app-btn"><svg viewBox="0 0 12 12"><circle cx="6" cy="6" r="5.500" fill="#8ddb6a"/><path d="M3 6h6q0-3-3-3T3 6t3 3h2.500" fill="none" stroke="#fff" stroke-width="1.500"/></svg><span>高级编辑器_百度经...</span></button>
  <button class="app-btn"><svg viewBox="0 0 12 12"><path d="M1 2h10v6H6l-2 3V8H1z" fill="#e9f4fc"/><path d="M3 4h6M3 6h6" stroke="#4a83c4"/></svg><span>新人交流</span></button>
  <b class="sogou">S</b>
  <div class="tray">
    <svg viewBox="0 0 12 12"><ellipse cx="6" cy="6" rx="4.500" ry="5" fill="#1c1c20"/><ellipse cx="6" cy="8" rx="2.500" ry="3" fill="#fff"/><path d="M1 7q5 2 10 0" stroke="#d63131" stroke-width="1.500" fill="none"/><path d="M4 5h4" stroke="#f2a22c" stroke-width="1.500"/></svg>
    <svg viewBox="0 0 12 12"><path d="M1 1l3 2h4l3-2-1 7-4 3-4-3z" fill="#c86f3d"/><circle cx="9" cy="9" r="3" fill="#4cab4a"/><path d="M7.500 9l1 1 2-2" stroke="#fff" fill="none"/></svg>
    <svg viewBox="0 0 12 12"><path d="M4 1h7v6H4zM1 5h6v5H1z" fill="#2a3a8e" stroke="#aac1ea" stroke-width=".7"/></svg>
    <svg viewBox="0 0 12 12"><circle cx="6" cy="6" r="4.500" fill="#c0c7cf" stroke="#4d5d71"/><path d="M3 5h2l3-2v6L5 7H3z" fill="#3a4859"/></svg>
    <svg viewBox="0 0 12 12"><path d="M6 1l5 2q0 6-5 8Q1 9 1 3z" fill="#fff" stroke="#539a46"/><path d="M6 3v6Q3 8 3 4z" fill="#6cc054"/></svg>
    <svg viewBox="0 0 12 12"><circle cx="6" cy="6" r="5.500" fill="#e6dc37"/><path d="M6 2v8M2 6h8" stroke="#378a35" stroke-width="2.500"/></svg>
    <time>13:08</time>
  </div>
</footer>

<section class="balloon">
  <header><svg viewBox="0 0 12 12"><circle cx="6" cy="6" r="5" fill="#dbe8f4" stroke="#8ba8c6"/><path d="M4 4h4v4H4z" fill="#5d8fc0"/></svg><strong>完成打印和作业发布</strong><button aria-label="关闭"><svg viewBox="0 0 8 8"><path d="M1.500 1.500l5 5M6.500 1.500l-5 5" stroke="#000" stroke-width="1.500"/></svg></button></header>
  <p>未找到错误或警告</p>
  <a href="#">单击以查看打印和发布详细信息...</a>
  <svg class="tail" viewBox="0 0 12 8"><path d="M0 0l7 7 4-7" fill="#ffffe1" stroke="#333"/><path d="M0 0h11" stroke="#ffffe1" stroke-width="2"/></svg>
</section>
<svg class="mark" viewBox="0 0 185 90" aria-hidden="true">
  <g fill="#fff" fill-opacity=".7"><text class="m1" x="2" y="55">Bai</text>
  <ellipse cx="71" cy="25" rx="6" ry="8"/><ellipse cx="83" cy="13" rx="6" ry="8"/><ellipse cx="99" cy="14" rx="6" ry="8"/><ellipse cx="110" cy="28" rx="6" ry="8"/>
  <path fill-rule="evenodd" d="M90 28q6 0 10 8l9 9q4 12-7 14-6 0-12-1-7 2-14 1-11-2-7-13 2-4 8-8 5-10 13-10zM84 40v4q-8-2-8 5t8 5h3V40zM91 44v7q0 4 4 4h6V44h-3v8h-4v-8z"/>
  <text class="m2" x="121" y="53">经验</text><text class="m3" x="4" y="81">jingyan.baidu.com</text></g>
</svg>
</div>
</body>
</html>
```
FILE: styles.css
```css
* { box-sizing: border-box; }
body { margin: 0; font: 8px/10px "Liberation Sans", "Noto Sans CJK SC", sans-serif; color: #111; }
button, input, select { margin: 0; padding: 0; border: 0; background: none; font: inherit; color: inherit; }
button { display: flex; align-items: center; justify-content: center; white-space: nowrap; }
ul, h1, p { margin: 0; padding: 0; list-style: none; }
svg { display: block; flex: none; width: 12px; height: 12px; }
.defs { position: absolute; width: 0; height: 0; }

.app { position: relative; display: flex; flex-direction: column; height: 100vh; overflow: hidden; background: #ebe9ed; }

/* title bar */
.title { display: flex; align-items: center; gap: 2px; height: 16px; padding: 0 2px 0 1px; background: linear-gradient(#8ec8fc, #7ab8f6 30%, #3f80d4 50%, #2a59b4); }
.title .logo { width: 10px; height: 10px; }
.title h1 { flex: 1; margin-left: 1px; font: bold 8px/14px "Liberation Sans", "Noto Sans CJK SC", sans-serif; color: #fff; text-shadow: 1px 1px 1px #1b3f80; }
.wb { width: 12px; height: 12px; margin-left: 1px; border: 1px solid #b9d6f5; border-radius: 2px; background: #3f78c8; }
.wb svg { width: 10px; height: 10px; }
.wb.close { background: #c8573f; }

/* menu bar */
.menu { display: flex; align-items: center; gap: 5px; height: 13px; padding-left: 2px; }
.menu .doc { margin-right: -3px; }
.ask { width: 124px; height: 11px; margin: 0 -5px 0 auto; padding: 0 2px; border: 1px solid #c4c2c8; background: #fff; }
.ask::placeholder { color: #999; }
.asktools { display: flex; align-items: center; justify-content: space-around; width: 41px; height: 11px; border: 1px solid #b9b7bd; background: #f8f8fa; }
.asktools svg { width: 10px; height: 10px; }
.mdi { width: 10px; height: 10px; margin-right: -3px; background: #f4f2f5; }
.mdi:last-child { margin-right: 1px; }
.mdi svg { width: 10px; height: 10px; }
.dd { flex: none; width: 0; border: 2px solid transparent; border-top: 3px solid #222; border-bottom: 0; }

/* toolbars */
.row { display: flex; height: 17px; align-items: center; }
.row.first { height: 18px; }
.bar { display: flex; flex: none; align-items: center; height: 17px; padding-right: 2px; border-right: 1px solid #bbb8c0; border-bottom: 1px solid #cfccd3; background: linear-gradient(#f7f6f8, #e4e1e7); }
.bar > button { flex: 1 1 14px; min-width: 0; height: 16px; }
.bar > button svg, .vbar svg { opacity: .88; }
.grip { flex: none; width: 4px; height: 15px; margin: 0 2px; border: 1px solid #bdbac2; border-width: 0 1px; background: #fff; }
.sep { flex: none; width: 1px; height: 13px; margin: 0 2px 0 1px; background: #c4c1c9; }
.bar-a { width: 230px; }
.bar-b { width: 313px; }
.bar-c { width: 346px; }
.bar-d { width: 149px; }
.bar-e { width: 257px; }
.bar-f { width: 371px; gap: 4px; }
.bar-f .grip { margin-right: -2px; }
.bar-g { flex: 1; border-right: 0; padding: 0; }
.bar-h { width: 158px; }
.bar-g .dd { margin: 0 2px; }
.bar-d > button, .bar-e > button { flex: 0 0 15px; }

.combo { display: flex; align-items: center; height: 13px; padding-left: 3px; border: 1px solid #b9bcc6; background: #fff; }
.combo select { flex: 1; min-width: 0; appearance: none; }
.combo.grow { flex: 1; }
.combo > svg { width: 10px; height: 10px; }
.arr { display: flex; align-items: center; justify-content: center; width: 10px; height: 11px; border: 1px solid #9eb5d6; background: #cfdef3; }
.arr svg { width: 8px; height: 8px; }
.by { font-family: "Liberation Serif", serif; font-weight: bold; }
.c1 { width: 93px; }
.c2 { width: 100px; }
.c3 { width: 77px; }
.c4 { width: 75px; }
.sw { flex: none; width: 7px; height: 7px; margin-right: 2px; border: 1px solid #333; background: #fff; }
.ln { flex: none; width: 38px; height: 1px; margin-right: 2px; background: #333; }
.ln.short { width: 22px; }
.off { background: #ebe9ed; border-color: #d5d2d9; color: #999; }
.off select { color: #999; opacity: 1; }
.off .arr { opacity: .4; }

/* screen menu */
.body { display: flex; flex: 1; min-height: 0; border-top: 1px solid #a9a7ae; }
.palette { flex: none; width: 58px; padding-top: 1px; border-right: 2px solid #8d8b92; background: #eeecf0; }
.phead { display: flex; align-items: center; gap: 2px; height: 10px; padding: 0 8px 0 4px; }
.phead i { flex: 1; height: 3px; border: 1px solid #bdbac2; border-width: 1px 0; }
.phead button { width: 7px; height: 7px; border: 1px solid #aaa; background: #fff; }
.phead svg { width: 6px; height: 6px; }
.palette ul { display: flex; flex-direction: column; justify-content: space-between; height: 202px; }
.palette li { display: flex; align-items: center; height: 11px; padding-left: 5px; }
.palette li::before { content: ""; width: 0; margin-right: 6px; border: 3px solid transparent; border-left: 3px solid #1f5383; border-right: 0; }

/* work area */
.main { display: flex; flex: 1; flex-direction: column; min-width: 0; }
.work { display: flex; flex: 1; min-height: 0; }
.vwrap { flex: none; width: 17px; border-right: 2px solid #9b99a0; }
.vwrap.right { width: 18px; border: 0; border-left: 1px solid #c6c3ca; }
.vbar { display: flex; flex-direction: column; align-items: center; border-bottom: 1px solid #bbb8c0; background: linear-gradient(90deg, #f7f6f8, #e6e3e9); }
.vbar button { flex: 1; width: 100%; min-height: 0; }
.vbar svg { width: 12px; height: 12px; }
.draw { height: 269px; }
.modify { height: 243px; }
.hgrip { flex: none; width: 12px; height: 4px; margin: 1px 0; border: 1px solid #bdbac2; border-width: 1px 0; background: #fff; }
.mtext { font: 12px/12px "Liberation Sans", sans-serif; }
.view { display: flex; flex: 1; flex-direction: column; min-width: 0; }
.canvas { position: relative; flex: 1; min-height: 0; overflow: hidden; background: #000; }
.drawing { width: 100%; height: 100%; }
.ucs { position: absolute; left: 0; bottom: 0; width: 80px; height: 86px; }
.ucs text { fill: #c8c8c8; stroke: none; font: 300 15px "Lato", sans-serif; }

.meter { position: absolute; right: 17px; top: 78px; display: flex; align-items: center; height: 24px; border-radius: 12px; background: linear-gradient(#fff, #ccc); }
.ball { width: 30px; height: 30px; margin-left: -1px; border: 2px solid #e5efe8; border-radius: 50%; background: linear-gradient(#197a50 50%, #4cc95e 50%); color: #fff; font: 9px/26px "DejaVu Sans", sans-serif; text-align: center; }
.rates { display: grid; grid-template-columns: 11px 24px; font: 6px/9px "DejaVu Sans", sans-serif; padding-left: 2px; text-align: center; }
.up { color: #c8352a; }
.dn { color: #2f8a3d; }

.tabs { display: flex; height: 13px; align-items: flex-start; border-bottom: 1px solid #fff; }
.nav { display: flex; }
.nav button { width: 9px; height: 10px; border: 1px solid #c4c1c9; color: #888; font-size: 6px; }
.tab { gap: 4px; height: 10px; padding-left: 4px; }
.tab::after { content: ""; width: 1px; height: 10px; background: #777; transform: skewX(-25deg); }
.tab.on { margin: 0 1px; padding: 0 6px; background: #000; color: #fff; clip-path: polygon(0 0, 100% 0, calc(100% - 4px) 100%, 4px 100%); }
.tab.on::after { content: none; }

.cmd { display: flex; align-items: center; height: 22px; padding: 6px 0 1px; border-top: 1px solid #555; }
.cmd label { display: flex; flex: 1; align-items: center; height: 14px; padding-left: 2px; border: 1px solid #555; border-width: 1px 0 0 1px; background: #fff; font: 9px/12px "Liberation Mono", "Noto Sans CJK SC", monospace; }
.cmd input { flex: 1; }

/* status bar */
.status { position: relative; display: flex; align-items: center; gap: 2px; height: 15px; padding-top: 1px; border-top: 1px solid #c9c7cd; background: #eff2f8; }
.status button { height: 12px; padding: 0 1px; border-right: 1px solid #bbb; }
.status .ratio { width: 51px; gap: 2px; border: 0; }
.coords { display: flex; gap: 14px; width: 86px; height: 12px; margin-right: 1px; border: 1px solid #c9ccd4; font: 7px/10px "Liberation Sans", sans-serif; }
.status > button { padding: 0; }
.status > .in { padding: 0 1px; }
.status .in { border: 1px solid #777; border-width: 1px 0 0 1px; background: #fafbfd; }
.status .mono { padding: 0; font: bold 7px/10px "Liberation Mono", monospace; }
.sright { display: flex; gap: 1px; margin: 0 65px 0 auto; }
.status .anno, .status .one, .status .si { border: 0; }
.status .one { gap: 2px; margin-right: 6px; }
.status .si { margin-right: 4px; }
.si svg { width: 10px; height: 10px; }
.ime { position: absolute; right: 0; bottom: 0; display: flex; align-items: center; justify-content: space-between; width: 72px; height: 12px; padding: 0 1px; background: #3589cb; color: #fff; font-size: 9px; }
.ime svg { width: 9px; height: 9px; }
.ime b, .sogou { width: 9px; height: 10px; background: #e3542f; color: #fff; font: bold 9px/10px "Liberation Sans", sans-serif; text-align: center; }

/* taskbar */
.task { display: flex; align-items: center; gap: 3px; height: 18px; background: linear-gradient(#79b2ee, #5a9ae6 35%, #3e79cd 55%, #2a55ad); color: #fff; }
.start { width: 54px; height: 18px; margin-right: 2px; gap: 4px; border-radius: 0 6px 6px 0; background: linear-gradient(#7fd06b, #37a632 35%, #258a22); font-size: 11px; text-shadow: 1px 1px 1px #1a4c17; }
.app-btn { justify-content: flex-start; width: 98px; height: 15px; gap: 2px; padding-left: 6px; border-radius: 2px; background: linear-gradient(#6eabf2, #4787dc 50%, #3268bf); }
.app-btn.on { background: #21499a; }
.app-btn svg { width: 10px; height: 10px; }
.sogou { margin-left: auto; margin-right: 4px; border: 1px solid #fff; line-height: 8px; }
.tray { display: flex; align-items: center; gap: 1px; width: 104px; height: 18px; padding-left: 7px; background: linear-gradient(#8ccbf7, #4fa5ea 50%, #3a86d2); color: #111; }
.tray svg { width: 10px; height: 10px; }
.tray time { margin-left: 5px; }

/* notification */
.balloon { position: absolute; right: 12px; bottom: 37px; width: 134px; height: 46px; padding: 3px 5px 3px 9px; border: 1px solid #333; border-radius: 8px; background: #ffffe1; line-height: 12px; }
.balloon header { display: flex; align-items: center; gap: 2px; height: 14px; margin-left: -3px; }
.balloon strong { flex: 1; white-space: nowrap; }
.balloon header button { width: 10px; height: 10px; border: 1px solid #777; background: #fff; }
.balloon header button svg { width: 8px; height: 8px; }
.balloon a { display: block; color: #1b1b9c; white-space: nowrap; }
.tail { position: absolute; right: 28px; bottom: -8px; width: 12px; height: 8px; }
.mark { position: absolute; right: 50px; bottom: 20px; width: 185px; height: 90px; pointer-events: none; }
.m1 { font: bold 34px "DejaVu Sans", sans-serif; }
.m2 { font: bold 28px "Noto Sans CJK SC", sans-serif; }
.m3 { font: 22px "Liberation Sans", sans-serif; }
```
